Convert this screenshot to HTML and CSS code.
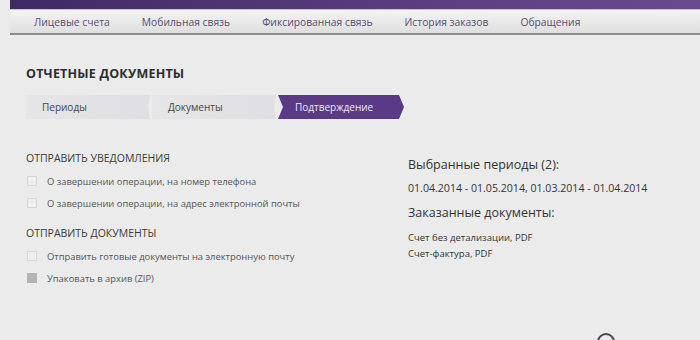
FILE: index.html
```html
<!DOCTYPE html>
<html lang="ru">
<head>
  <meta charset="UTF-8" />
  <title>Отчетные документы</title>
  <link rel="stylesheet" href="styles.css">
</head>
<body>
  <div class="header">
    <div class="topbar"></div>
    <ul class="menu">
      <li>Лицевые счета</li>
      <li>Мобильная связь</li>
      <li>Фиксированная связь</li>
      <li>История заказов</li>
      <li>Обращения</li>
    </ul>
  </div>

  <div class="content">
    <h1>Отчетные документы</h1>
    <div class="steps">
      <div class="step">Периоды</div>
      <div class="step">Документы</div>
      <div class="step active">Подтверждение</div>
    </div>

    <div class="columns">
      <div class="options">
        <h2>Отправить уведомления</h2>
        <label class="check"><span class="box"></span>О завершении операции, на номер телефона</label>
        <label class="check"><span class="box"></span>О завершении операции, на адрес электронной почты</label>

        <h2>Отправить документы</h2>
        <label class="check"><span class="box"></span>Отправить готовые документы на электронную почту</label>
        <label class="check"><span class="box checked"></span>Упаковать в архив (ZIP)</label>
      </div>

      <div class="summary">
        <h3>Выбранные периоды (2):</h3>
        <p class="periods">01.04.2014 - 01.05.2014, 01.03.2014 - 01.04.2014</p>
        <h3>Заказанные документы:</h3>
        <p class="docs">Счет без детализации, PDF<br>Счет-фактура, PDF</p>
      </div>
    </div>
  </div>

  <div class="help"></div>
</body>
</html>
```

FILE: styles.css
```css
body {
  margin: 0;
  height: 340px;
  overflow: hidden;
  background: #ebebeb;
  font-family: "Open Sans", sans-serif;
  color: #444;
  position: relative;
}

.header {
  margin-left: 10px;
}

.topbar {
  height: 9px;
  background: linear-gradient(90deg, #3f2a63, #5b3d80 60%, #6a4a8e);
}

.menu {
  list-style: none;
  margin: 0;
  padding: 0 0 0 24px;
  height: 23px;
  display: flex;
  gap: 32px;
  align-items: center;
  background: linear-gradient(#f4f4f4, #dedede);
  border-top: 1px solid #c8c0d4;
  border-bottom: 2px solid #8d8d8f;
  font-size: 10.3px;
  color: #5a4d72;
}

.content {
  padding: 0 26px;
}

h1 {
  margin: 30px 0 0;
  font-size: 12.5px;
  font-weight: 700;
  text-transform: uppercase;
  color: #2e2e2e;
  letter-spacing: 0.2px;
}

.steps {
  display: flex;
  margin-top: 13px;
  height: 24px;
}

.step {
  width: 124px;
  margin-right: 2px;
  padding-left: 16px;
  box-sizing: border-box;
  display: flex;
  align-items: center;
  font-size: 10px;
  color: #444;
  background: linear-gradient(90deg, #e6e6e9, #dfdfe3);
  clip-path: polygon(0 0, 100% 0, calc(100% - 2px) 50%, 100% 100%, 0 100%);
}

.step.active {
  width: 126px;
  padding-left: 17px;
  color: #eee6f6;
  background: #5a3a86;
  clip-path: polygon(0 0, calc(100% - 5px) 0, 100% 50%, calc(100% - 5px) 100%, 0 100%, 5px 50%);
}

.columns {
  display: flex;
  margin-top: 32px;
}

.options {
  width: 382px;
}

h2 {
  margin: 0 0 5px;
  font-size: 10.5px;
  font-weight: 400;
  text-transform: uppercase;
  color: #3a3a3a;
}

.check {
  display: flex;
  align-items: center;
  height: 22px;
  font-size: 9.4px;
  color: #555;
}

.check + h2 {
  margin-top: 12px;
}

.box {
  width: 8px;
  height: 8px;
  margin: 0 10px 0 1px;
  border: 1px solid #d6d6d6;
  background: #eeeeee;
}

.box.checked {
  background: #b4b4b4;
  border-color: #b4b4b4;
}

.summary {
  padding-top: 5px;
}

h3 {
  margin: 0;
  font-size: 12.5px;
  font-weight: 400;
  color: #333;
}

.periods {
  margin: 8px 0 9px;
  font-size: 10.6px;
  color: #333;
}

.docs {
  margin: 9px 0 0;
  font-size: 9.5px;
  line-height: 16px;
  color: #333;
}

.help {
  position: absolute;
  left: 597px;
  top: 333px;
  width: 14px;
  height: 14px;
  border: 2px solid #4a4458;
  border-radius: 50%;
}
```
